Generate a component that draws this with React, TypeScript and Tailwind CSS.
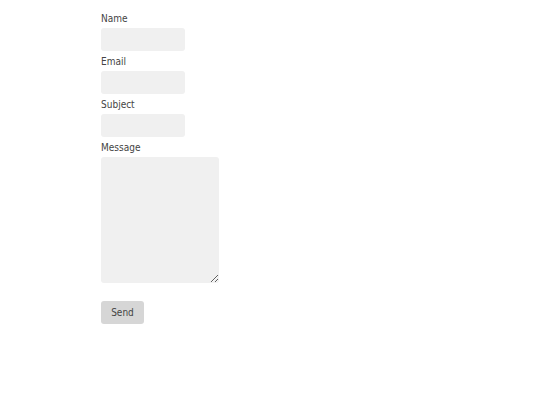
import React from 'react';

const fields = ['Name', 'Email', 'Subject'];

export default function App() {
  return (
    <div className="min-h-[405px] w-full bg-white pl-[101px] pt-[12px]" style={{ fontFamily: '"DejaVu Sans Condensed", "DejaVu Sans", sans-serif' }}>
      <form className="flex flex-col items-start" onSubmit={e => e.preventDefault()}>
        {fields.map(f => (
          <React.Fragment key={f}>
            <label className="text-[10px] leading-[13px] text-[#444] [font-stretch:condensed]">{f}</label>
            <input
              type="text"
              className="mt-[3px] mb-[4px] h-[23px] w-[84px] rounded-[3px] bg-[#f0f0f0] outline-none"
            />
          </React.Fragment>
        ))}
        <label className="text-[10px] leading-[13px] text-[#444] [font-stretch:condensed]">Message</label>
        <textarea className="mt-[3px] block h-[126px] w-[118px] rounded-[3px] bg-[#f0f0f0] outline-none" />
        <button
          type="submit"
          className="mt-[18px] h-[23px] w-[43px] rounded-[3px] bg-[#d6d6d6] text-[10px] text-[#444] [font-stretch:condensed]"
        >
          Send
        </button>
      </form>
    </div>
  );
}
